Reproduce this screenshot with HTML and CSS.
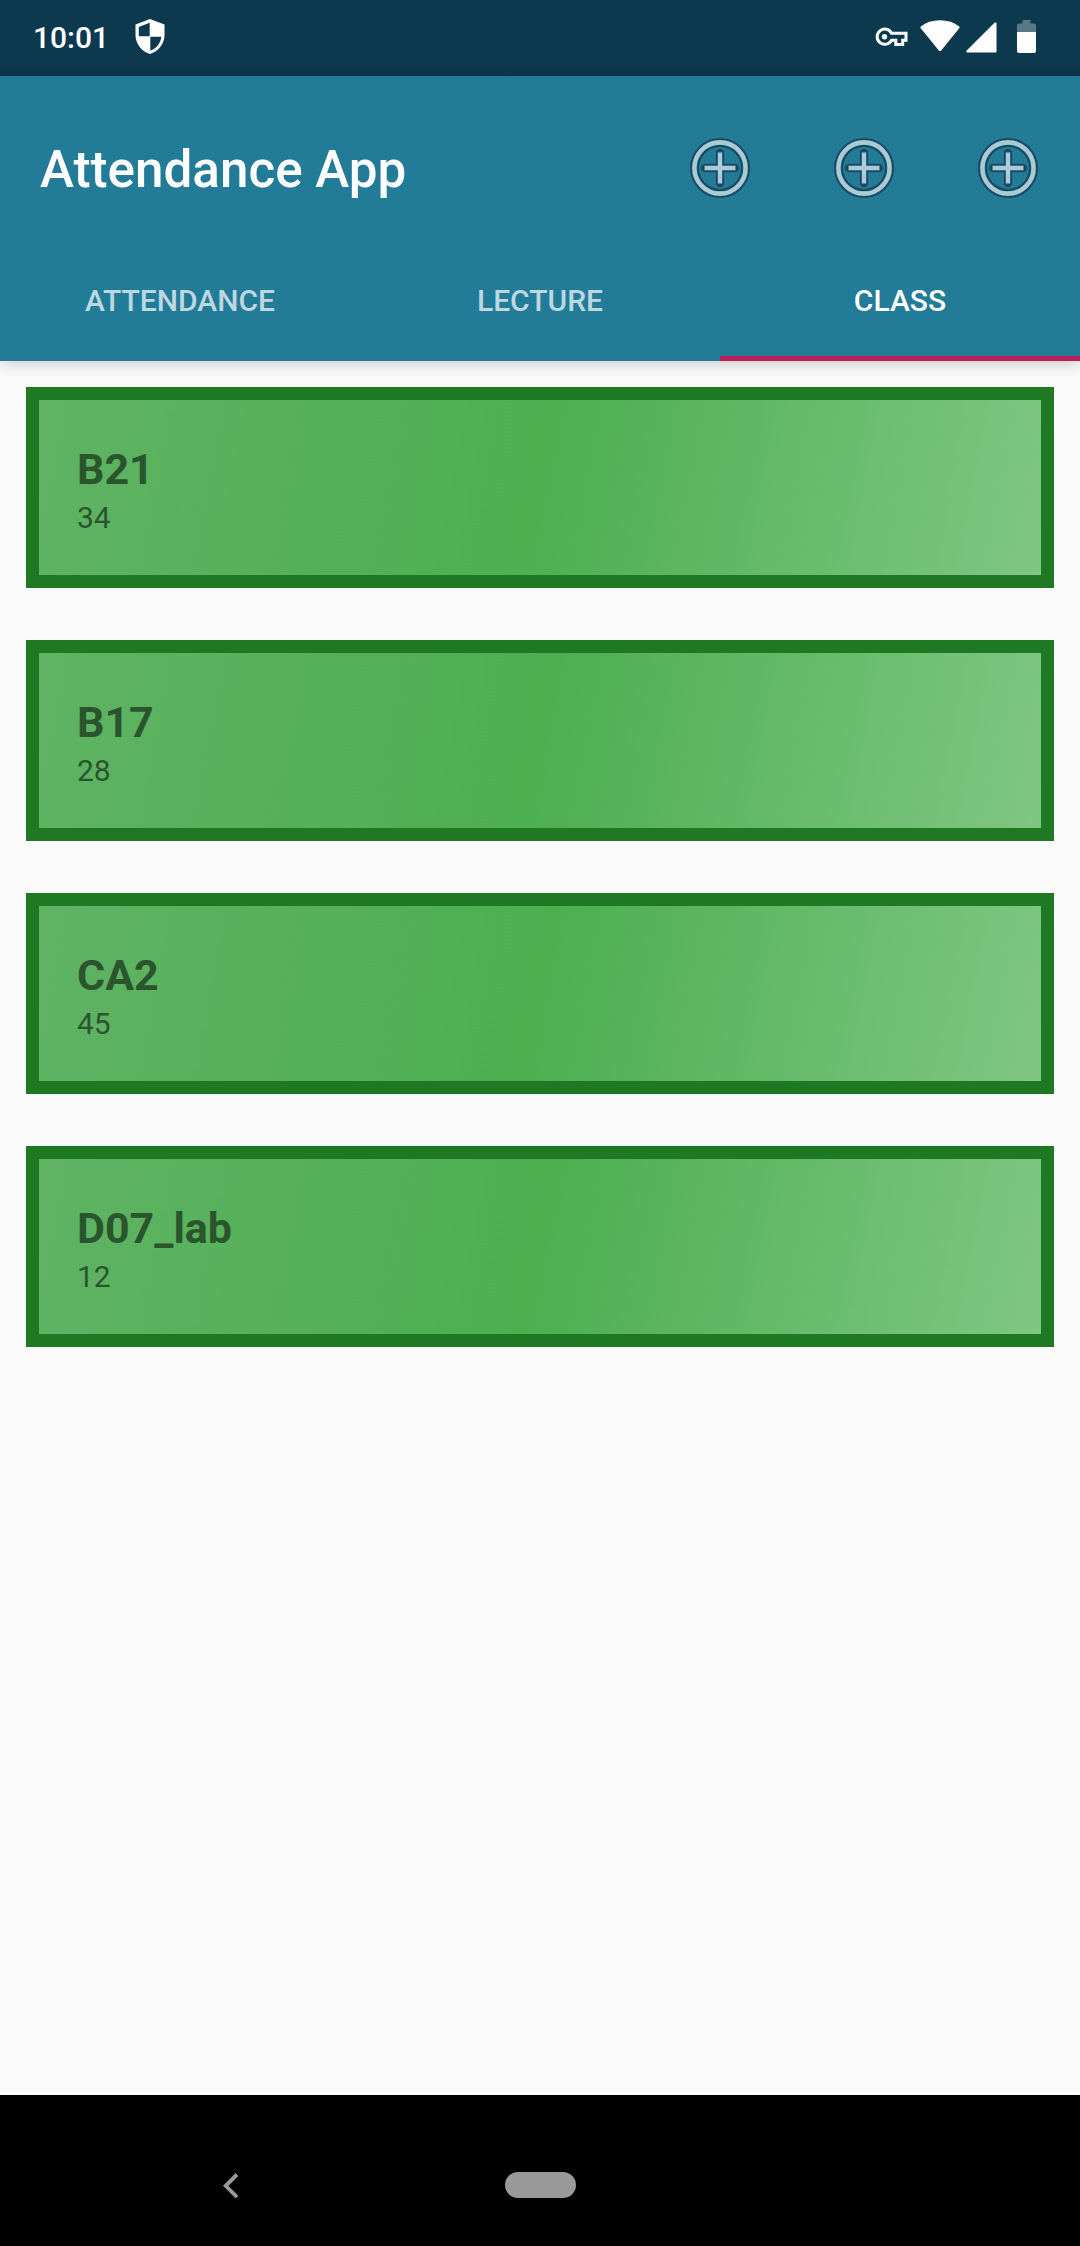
FILE: index.html
```html
<!DOCTYPE html>
<html lang="en">
<head>
<meta charset="utf-8">
<title>Attendance App</title>
<link rel="stylesheet" href="styles.css">
</head>
<body>
<svg width="0" height="0" class="defs" aria-hidden="true">
  <symbol id="add" viewBox="0 0 60 60">
    <g fill="none" stroke="#194c5f">
      <circle cx="30" cy="30" r="25.500" stroke-width="9"/>
      <path d="M30 15v30M15 30h30" stroke-width="8.400" stroke-linecap="round"/>
    </g>
    <g fill="none" stroke="#a9cad6">
      <circle cx="30" cy="30" r="25.600" stroke-width="4.600"/>
      <path d="M30 14.500v31M14.500 30h31" stroke-width="4.400"/>
    </g>
  </symbol>
</svg>
<div class="screen">
  <div class="status">
    <span class="time">10:01</span>
    <svg class="shield" viewBox="0 0 30 35" width="30" height="35"><path fill="#fff" fill-rule="evenodd" d="M15 0L29.500 5.600V16c0 8.500-6 16.500-14.500 19C6.500 32.500.5 24.500.5 16V5.600zM14.700 3.700L3.800 8V17.200H14.700zM15.300 17.800V31.800C21.500 29.500 25.800 24 26.300 17.800z"/></svg>
    <div class="system">
      <svg class="key" viewBox="0 0 33 20" width="33" height="20"><path d="M16.500 6.200H31V13.200H27.700V17.500H20.800V13.200H16.500A7.600 7.600 0 1 1 16.500 6.200z" fill="none" stroke="#fff" stroke-width="3"/><circle cx="9.500" cy="9.700" r="2.700" fill="#fff"/></svg>
      <svg class="wifi" viewBox="0 0 40 32" width="40" height="32"><path fill="#fff" d="M.8 6.400C6 2.300 12.500.3 20 .3S34 2.300 39.200 6.400q.8.800.2 1.700L21.200 30.500q-1.200 1.200-2.400 0L.6 8.100Q0 7.200.8 6.400z"/></svg>
      <svg class="signal" viewBox="0 0 31 31" width="31" height="31"><path fill="#fff" d="M30.500 1.500V29.500q0 1-1 1H1.500q-1.800-.5-.8-2L28.500.7q1.600-.8 2 .8z"/></svg>
      <svg class="battery" viewBox="0 0 19 33" width="19" height="33"><path fill="#587888" d="M5.500 0h8v3.500H17q2 0 2 2V12H0V5.500q0-2 2-2h3.500z"/><path fill="#fff" d="M0 12h19v19q0 2-2 2H2q-2 0-2-2z"/></svg>
    </div>
  </div>
  <header class="appbar">
    <div class="toolbar">
      <h1>Attendance App</h1>
      <div class="actions">
        <svg width="60" height="60"><use href="#add"/></svg>
        <svg width="60" height="60"><use href="#add"/></svg>
        <svg width="60" height="60"><use href="#add"/></svg>
      </div>
    </div>
    <nav class="tabs">
      <div class="tab">ATTENDANCE</div>
      <div class="tab">LECTURE</div>
      <div class="tab active">CLASS</div>
    </nav>
  </header>
  <main class="list">
    <section class="card"><h2>B21</h2><p>34</p></section>
    <section class="card"><h2>B17</h2><p>28</p></section>
    <section class="card"><h2>CA2</h2><p>45</p></section>
    <section class="card"><h2>D07_lab</h2><p>12</p></section>
  </main>
  <footer class="navbar">
    <svg class="back" viewBox="0 0 16 26" width="16" height="26"><path d="M14 1.500L2.700 12.800 14 24.100" fill="none" stroke="#999" stroke-width="3.900"/></svg>
    <div class="pill"></div>
  </footer>
</div>
</body>
</html>
```
FILE: styles.css
```css
* { box-sizing: border-box; }
body { margin: 0; font-family: Roboto, sans-serif; background: #fafafa; }
h1, h2, p { margin: 0; }
svg { display: block; flex: none; }
.defs { display: none; }
.screen { height: 2246px; display: flex; flex-direction: column; overflow: hidden; }

.status {
  height: 76px;
  flex: none;
  display: flex;
  align-items: flex-start;
  padding-left: 33px;
  padding-right: 44px;
  background: linear-gradient(#0d394f 66px, #0b3147);
}
.time { width: 102px; margin-top: 20px; font-size: 30px; line-height: 36px; font-weight: 500; color: #fff; }
.shield { margin-top: 19px; }
.system { display: flex; margin-left: auto; }
.key { margin-top: 27px; margin-right: 12px; }
.wifi { margin-top: 20px; margin-right: 6px; }
.signal { margin-top: 22px; margin-right: 20px; }
.battery { margin-top: 20px; }

.appbar {
  height: 285px;
  flex: none;
  display: flex;
  flex-direction: column;
  background: #227b97;
  box-shadow: 0 4px 14px rgba(0, 0, 0, .17);
  clip-path: inset(0 0 -30px 0);
}
.toolbar { height: 159px; display: flex; align-items: center; justify-content: space-between; padding: 24px 42px 0 40px; }
.toolbar h1 { padding-top: 5px; font-size: 51.2px; line-height: 62px; font-weight: 500; color: #fff; }
.actions { display: flex; gap: 84px; }
.tabs { height: 126px; display: grid; grid-template-columns: repeat(3, 1fr); }
.tab { padding-top: 9px; border-bottom: 5px solid transparent; display: flex; align-items: center; justify-content: center; font-size: 30px; font-weight: 500; color: #bdd7e0; }
.tab.active { color: #fff; border-color: #b81f58; }

.list { flex: 1; display: flex; flex-direction: column; gap: 52px; padding: 26px; }
.card {
  height: 201px;
  border: 13px solid #1f7822;
  padding: 44px 38px 0;
  background: linear-gradient(101deg, #60b364, #4caf50 50%, #81c784) border-box;
  color: #2b552d;
}
.card h2 { font-size: 43px; line-height: 50px; font-weight: 700; }
.card p { font-size: 30px; line-height: 37px; margin-top: 5px; }

.navbar { height: 151px; flex: none; display: flex; align-items: flex-start; background: #000; padding: 77px 0 0 223px; }
.back { margin-top: 1px; }
.pill { width: 71px; height: 26px; margin-left: 266px; border-radius: 13px; background: #999; }
```
